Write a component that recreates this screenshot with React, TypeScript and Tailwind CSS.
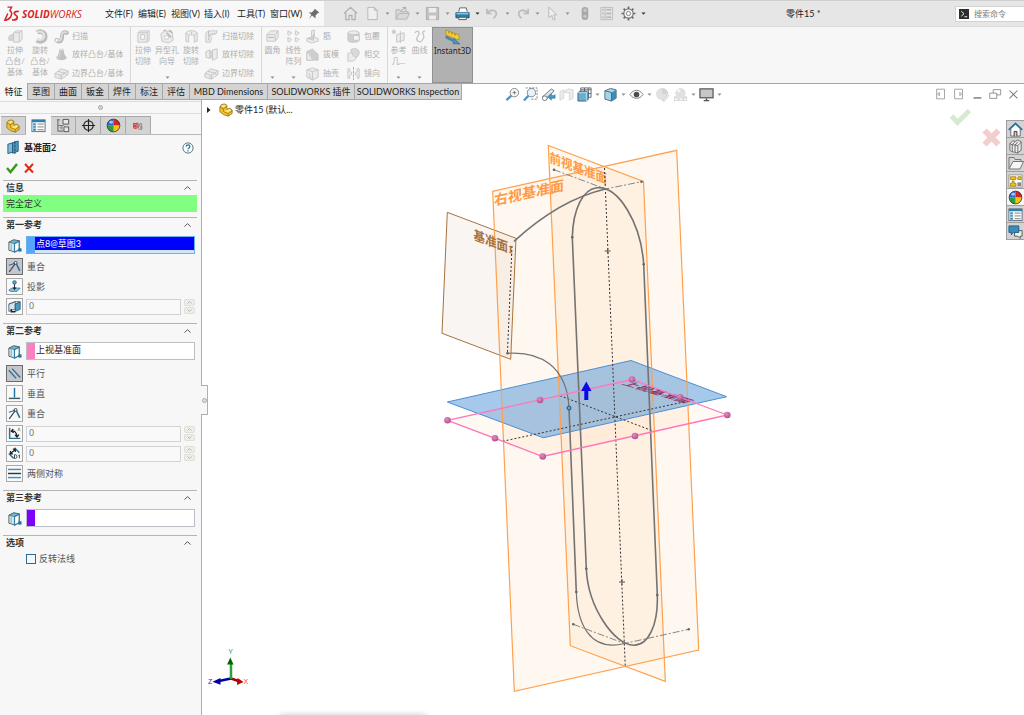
import React from "react";

type IconProps = { size?: number; box?: string; children: React.ReactNode };

function Icon({ size = 15, box = "0 0 16 16", children }: IconProps) {
  return (
    <svg width={size} height={size} viewBox={box} fill="none" aria-hidden="true" className="shrink-0">
      {children}
    </svg>
  );
}

function Caret({ dark = false }: { dark?: boolean }) {
  return (
    <svg width="5" height="3" viewBox="0 0 5 3" aria-hidden="true" className="shrink-0">
      <path d="M0.5 0.5h4L2.5 2.7z" fill={dark ? "#333333" : "#8c8c8c"} />
    </svg>
  );
}

/* ---------- disabled feature glyphs ---------- */
const G = { stroke: "#c6c6c6", fill: "#ebebeb", strokeWidth: 1, strokeLinejoin: "round" as const };

const glyphs: Record<string, React.ReactNode> = {
  extrude: (
    <g {...G}>
      <path d="M1 8l3-2h3v6H1z" fill="#d6d6d6" />
      <path d="M6 4l3-2h6v9l-3 3H6z" />
      <path d="M6 4h6v10M12 4l3-2" />
    </g>
  ),
  revolve: (
    <g>
      <path d="M4.500 4c3-2.500 8.500-.5 8.500 4s-5 6.500-9 4" stroke="#bcbcbc" strokeWidth="5" />
      <path d="M4.500 3.500c3-2 7.500 0 7.500 4s-4 5-8 3.500" stroke="#e2e2e2" strokeWidth="2.200" />
    </g>
  ),
  sweep: (
    <g>
      <path d="M3 12c4 3 5.500 0 5.500-4s2-5 5-4" stroke="#bababa" strokeWidth="4.500" strokeLinecap="round" />
      <path d="M3 12c4 2 5-1 5-4.500S10 3 13 3.500" stroke="#dedede" strokeWidth="1.800" strokeLinecap="round" />
      <circle cx="3" cy="12" r="2" fill="#f4f4f4" stroke="#bdbdbd" />
    </g>
  ),
  loft: (
    <g>
      <path d="M5.500 2.500h5c0 5 1 6.500 3 8.500 1 4-12 4-11 0 2-2 3-3.500 3-8.500z" fill="#c2c2c2" />
      <ellipse cx="8" cy="2.800" rx="2.500" ry="1.200" fill="#dddddd" />
      <path d="M6.500 5c0 4-1 6-3 7" stroke="#d8d8d8" />
    </g>
  ),
  boundary: (
    <g {...G}>
      <path d="M1 8l6-5 8 2v4l-7 5-7-2z" />
      <path d="M1 8l7 2 7-5M8 10v4M4 5.500l7 2M5 12.500l6-5 3 2" />
    </g>
  ),
  cutExtrude: (
    <g {...G}>
      <path d="M2 4l2-2h10v10l-2 2H2z" />
      <path d="M2 4h10v10M12 4l2-2" />
      <rect x="5" y="6" width="4" height="5" fill="#fafafa" />
    </g>
  ),
  hole: (
    <g {...G}>
      <path d="M1 5l4-3 8 1 1 9-5 3-7-2z" />
      <ellipse cx="7" cy="9" rx="2.500" ry="2" fill="#fafafa" />
      <path d="M7 4l5 5M10 1l3 3M4 2l2-1" stroke="#b5b5b5" strokeWidth="1.500" />
    </g>
  ),
  cutRevolve: (
    <g {...G}>
      <path d="M2 4c3-3 9-3 12 0v9l-3 1V7c-1-1-5-1-6 0v7l-3-1z" />
      <path d="M2 4l3 3M14 4l-3 3M8 3v3" />
    </g>
  ),
  cutSweep: (
    <g {...G}>
      <path d="M2 4l3-2h9l-1 3c-3 0-5 2-5 5l-1 4H2z" />
      <path d="M5 12c0-5 2-7 7-7M5 2v6" stroke="#b4b4b4" />
    </g>
  ),
  cutLoft: (
    <g {...G}>
      <path d="M2 5l4-2v9l-4-1zM9 3l5-1v10l-5 2z" />
      <path d="M6 4l3 1v6l-3 1" fill="#d4d4d4" />
    </g>
  ),
  fillet: (
    <g {...G}>
      <path d="M2 6l4-4h8v7l-3 4H2z" />
      <path d="M2 6h6c3 0 3 1 3 3v4M11 6l3-4" />
      <path d="M3 9h7" stroke="#b4b4b4" />
    </g>
  ),
  pattern: (
    <g {...G}>
      <path d="M2 2l4 2-3 3-1-1zM10 2l4 2-3 3-1-1zM2 9l4 2-3 3-1-1zM10 9l4 2-3 3-1-1z" />
    </g>
  ),
  rib: (
    <g {...G}>
      <path d="M2 10l5-1V2l3-1v8l4 1v3l-7 2-5-2z" />
      <path d="M7 9L3 10l6 2V5" fill="#d0d0d0" />
    </g>
  ),
  draft: (
    <g {...G}>
      <path d="M2 5l6-3 6 6v6H2z" fill="#cfcfcf" />
      <path d="M2 5h4l8 3M6 5l8 9M2 5v9h6" />
    </g>
  ),
  shell: (
    <g {...G}>
      <path d="M2 4l6-2 6 2v8l-6 3-6-3z" />
      <path d="M2 4l6 2v9M8 6l6-2M5 8v4l2 1" />
    </g>
  ),
  wrap: (
    <g {...G}>
      <path d="M2 4v8c0 3 12 3 12 0V4" fill="#cfcfcf" />
      <ellipse cx="8" cy="4" rx="6" ry="2" />
      <path d="M8 7h6v5H8z" fill="#f4f4f4" />
    </g>
  ),
  intersect: (
    <g {...G}>
      <path d="M2 7l3-1h6v6l-3 3H2z" />
      <path d="M5 3c3-2 9-2 9 3s-4 5-6 4z" fill="#d9d9d9" />
    </g>
  ),
  mirror: (
    <g {...G}>
      <path d="M2 3h2v3l2 1v2l-2 1v3H2zM14 3h-2v3l-2 1v2l2 1v3h2z" />
      <path d="M8 1v14" stroke="#a8a8a8" strokeDasharray="3 1" />
    </g>
  ),
  refGeo: (
    <g {...G}>
      <circle cx="3" cy="3" r="1.800" fill="#cfcfcf" />
      <path d="M6 6l8-2v8l-8 2zM10 2v13" />
    </g>
  ),
  curve: <path d="M3 4c4-4 6 0 3 4s2 7 4 5 4-4 2-7 1-4 2-4" stroke="#c0c0c0" strokeWidth="1.300" />,
};

type Big = { icon: string; lines: string[]; more?: boolean; w: "n" | "s" };

function BigButton({ icon, lines, more, w }: Big) {
  return (
    <button
      type="button"
      aria-disabled="true"
      className={`flex shrink-0 flex-col items-center pt-[2px] text-[8px] leading-[11px] whitespace-nowrap text-[#b0b0b0] ${
        w === "n" ? "w-6" : "w-[21px]"
      }`}
    >
      <Icon>{glyphs[icon]}</Icon>
      <span className="flex flex-col pt-px">
        {lines.map((l) => (
          <span key={l}>{l}</span>
        ))}
      </span>
      {more && (
        <span className="mt-auto pb-1">
          <Caret />
        </span>
      )}
    </button>
  );
}

function SmallColumn({ items }: { items: [string, string][] }) {
  return (
    <div className="flex shrink-0 flex-col justify-around pl-px">
      {items.map(([icon, label]) => (
        <button
          key={label}
          type="button"
          aria-disabled="true"
          className="flex items-center gap-[3px] text-[8px] leading-[11px] whitespace-nowrap text-[#b0b0b0]"
        >
          <Icon size={15}>{glyphs[icon]}</Icon>
          {label}
        </button>
      ))}
    </div>
  );
}

/* ---------- title bar ---------- */
const menus = ["文件(F)", "编辑(E)", "视图(V)", "插入(I)", "工具(T)", "窗口(W)"];

function ToolButton({ label, more, dark, wide, children }: { label: string; more?: boolean; dark?: boolean; wide?: boolean; children: React.ReactNode }) {
  return (
    <button type="button" aria-label={label} className={`flex shrink-0 items-center ${wide ? "mr-[7px]" : ""}`}>
      <Icon>{children}</Icon>
      {more && (
        <span className="flex w-[15px] justify-center">
          <Caret dark={dark} />
        </span>
      )}
    </button>
  );
}

function TitleBar() {
  return (
    <header className="flex h-[27px] items-stretch border-t border-b border-t-[#cfcfcf] border-b-[#dcdcdc] bg-[#e6e6e6]">
      <div className="flex w-[324px] shrink-0 items-center bg-[#f8f8f8] pl-1">
        <svg width="16" height="16" viewBox="0 0 16 16" fill="none" aria-hidden="true">
          <path d="M3.500 1.200h4.200L5.600 4.800" stroke="#d8232a" strokeWidth="1.300" />
          <path d="M5.600 4.800C8 5.500 8.300 8 6.500 11 5 13.300 3 14 .8 14.200L3.800 7.500" stroke="#d8232a" strokeWidth="1.500" />
          <path d="M14.800 5.500c-2.500-.3-4.300.2-4.500 1.800-.2 1.700 3.400 2 3 4.200-.3 2-2.600 2.700-5.300 2.400" stroke="#d8232a" strokeWidth="1.700" />
        </svg>
        <div className="ml-[2px] w-[83px] text-[10px] leading-[14px] text-[#d8232a] italic [font-family:'Open_Sans',sans-serif]">
          <b>SOLID</b>WORKS
        </div>
        <nav className="flex w-[199px] gap-[6px] text-[9px] leading-[14px] whitespace-nowrap text-[#222222]">
          {menus.map((m) => (
            <button key={m} type="button" className="w-[27px] text-left">
              {m}
            </button>
          ))}
        </nav>
        <button type="button" aria-label="固定菜单" className="ml-1">
          <Icon size={12}>
            <path d="M9 1l6 5-2 1-3 3v4L5.500 10 1 15l3.500-6L1 5.500l4 .5 3-3z" fill="#6e6e6e" />
          </Icon>
        </button>
      </div>
      <div className="flex flex-1 items-center pl-[19px]">
        <ToolButton label="主页" wide>
          <path d="M1 8l7-6.500L15 8M3 7v7.500h3.500V10h3v4.500H13V7" stroke="#b0b0b0" strokeWidth="1.300" />
        </ToolButton>
        <ToolButton label="新建" more>
          <path d="M3 1.500h7l3 3v10H3zM10 1.500v3h3" stroke="#b8b8b8" fill="#efefef" />
        </ToolButton>
        <ToolButton label="打开" more>
          <path d="M1 14V4h4l1 2h8v2M1 14l3-6h11.500l-3 6z" stroke="#b4b4b4" fill="#d9d9d9" />
          <path d="M6 5l5-3M8 1.500h3.500V5" stroke="#a6a6a6" />
        </ToolButton>
        <ToolButton label="保存" more>
          <path d="M1.500 1.500h13v13h-13z" fill="#c2c2c2" stroke="#adadad" />
          <path d="M4 2h8v5H4zM4.500 10h7v4.500h-7z" fill="#ededed" />
        </ToolButton>
        <ToolButton label="打印" more dark>
          <path d="M4 6l1-4h7l1 4" fill="#ffffff" stroke="#606060" />
          <path d="M1 7h14v5.500H1z" fill="#2c7da8" stroke="#1d5573" />
          <path d="M1.500 7h13v2h-13z" fill="#86c4e3" />
          <path d="M4 12h8v2.500H4z" fill="#ffffff" stroke="#555555" />
        </ToolButton>
        <ToolButton label="撤消" more>
          <path d="M2 3v5h5M2 8c3-5 11-4 10 1-.3 2-1.500 3-3 4" stroke="#bcbcbc" strokeWidth="1.800" />
        </ToolButton>
        <ToolButton label="重做" more>
          <path d="M14 3v5H9M14 8c-3-5-11-4-10 1 .3 2 1.500 3 3 4" stroke="#bcbcbc" strokeWidth="1.800" />
        </ToolButton>
        <ToolButton label="选择" more>
          <path d="M4 1l8.500 8.500H9l2 4.500-2 1-2-4.800L4 12.500z" stroke="#b8b8b8" fill="#eeeeee" />
        </ToolButton>
        <div className="w-[2px]" />
        <ToolButton label="重建模型" wide>
          <rect x="5" y="1" width="7" height="14" rx="3.500" fill="#a8a8a8" />
          <circle cx="8.500" cy="4.500" r="1.800" fill="#c9c9c9" />
          <circle cx="8.500" cy="11" r="1.800" fill="#c9c9c9" />
        </ToolButton>
        <ToolButton label="文件属性" wide>
          <path d="M2 1.500h12.500v13H2zM6.500 1.500v13" stroke="#bdbdbd" fill="#e2e2e2" />
          <path d="M3.500 4h1.500M3.500 8h1.500M3.500 12h1.500M8 4h5M8 8h5M8 12h5" stroke="#b4b4b4" strokeWidth="1.500" />
        </ToolButton>
        <ToolButton label="选项" more dark>
          <circle cx="8" cy="8" r="5" stroke="#7c7c7c" strokeWidth="1.300" fill="#f4f4f4" />
          <circle cx="8" cy="8" r="2.200" stroke="#7c7c7c" fill="#ffffff" />
          <path d="M8 .6v2.600M8 12.800v2.600M.6 8h2.600M12.800 8h2.600M2.800 2.800l1.800 1.800M11.400 11.400l1.800 1.800M13.200 2.800l-1.800 1.800M4.600 11.400l-1.800 1.800" stroke="#6c6c6c" strokeWidth="1.800" />
        </ToolButton>
        <h1 className="ml-auto w-[169px] text-[9px] leading-[14px] text-[#222222]">零件15 *</h1>
        <div className="flex h-4 w-[69px] items-center gap-[5px] border border-r-0 border-[#d2d2d2] bg-white pl-[3px]">
          <Icon size={10} box="0 0 11 11">
            <rect width="11" height="11" fill="#2e2e2e" />
            <path d="M2.500 2.500l3 2.700-3 2.800M6 8.500h3" stroke="#ffffff" />
          </Icon>
          <input aria-label="搜索命令" className="h-[14px] w-12 bg-transparent text-[8px] leading-[12px] outline-none placeholder:text-[#7d7d7d]" placeholder="搜索命令" />
        </div>
      </div>
    </header>
  );
}

function Ribbon() {
  return (
    <section aria-label="特征工具栏" className="flex h-[56px] items-stretch bg-[#f7f7f7]">
      <div className="flex w-[131px] shrink-0 gap-px border-r border-[#d8d8d8] pl-[3px]">
        <BigButton w="n" icon="extrude" lines={["拉伸", "凸台/", "基体"]} />
        <BigButton w="n" icon="revolve" lines={["旋转", "凸台/", "基体"]} />
        <SmallColumn items={[["sweep", "扫描"], ["loft", "放样凸台/基体"], ["boundary", "边界凸台/基体"]]} />
      </div>
      <div className="flex w-[131px] shrink-0 border-r border-[#d8d8d8]">
        <BigButton w="n" icon="cutExtrude" lines={["拉伸", "切除"]} />
        <BigButton w="n" icon="hole" lines={["异型孔", "向导"]} more />
        <BigButton w="n" icon="cutRevolve" lines={["旋转", "切除"]} />
        <SmallColumn items={[["cutSweep", "扫描切除"], ["cutLoft", "放样切除"], ["boundary", "边界切除"]]} />
      </div>
      <div className="flex w-[126px] shrink-0 border-r border-[#d8d8d8]">
        <BigButton w="s" icon="fillet" lines={["圆角"]} more />
        <BigButton w="s" icon="pattern" lines={["线性", "阵列"]} more />
        <SmallColumn items={[["rib", "筋"], ["draft", "拔模"], ["shell", "抽壳"]]} />
        <div className="ml-[6px] flex">
          <SmallColumn items={[["wrap", "包覆"], ["intersect", "相交"], ["mirror", "镜向"]]} />
        </div>
      </div>
      <div className="flex w-[44px] shrink-0">
        <BigButton w="s" icon="refGeo" lines={["参考", "几..."]} more />
        <BigButton w="s" icon="curve" lines={["曲线"]} more />
      </div>
      <button
        type="button"
        aria-pressed="true"
        className="flex w-[41px] shrink-0 flex-col items-center border border-[#919191] bg-[#b1b1b1] pt-px text-[8px] leading-[11px] text-[#222222] [font-family:'Noto_Sans',sans-serif]"
      >
        <Icon size={16}>
          <path d="M1 1l13 5v5L1 6z" fill="#f6cf3a" stroke="#a78617" strokeWidth=".7" />
          <path d="M4 2.500v2M7 3.600v2M10 4.700v2" stroke="#8f7310" />
          <path d="M1 7l8 4V9.500l6 5.500-7-.3 1-1.700-8-4z" fill="#4d94be" stroke="#286486" strokeWidth=".6" />
        </Icon>
        Instant3D
      </button>
    </section>
  );
}

const shortTabs = ["特征", "草图", "曲面", "钣金", "焊件", "标注", "评估"];

function TabRow() {
  return (
    <div className="flex h-[17px] items-stretch bg-white text-[9px] leading-[14px] whitespace-nowrap text-[#222222]">
      <div role="tablist" aria-label="命令管理器" className="flex">
        {shortTabs.map((t, i) => (
          <button
            key={t}
            role="tab"
            aria-selected={i === 0}
            type="button"
            className={
              i === 0
                ? "w-[27px] bg-[#f7f7f7]"
                : "w-[27px] border border-r-0 border-[#a6a6a6] bg-[#d4d4d4]"
            }
          >
            {t}
          </button>
        ))}
        <button role="tab" type="button" className="w-[78px] border border-r-0 border-[#a6a6a6] bg-[#d4d4d4]">MBD Dimensions</button>
        <button role="tab" type="button" className="w-[87px] border border-r-0 border-[#a6a6a6] bg-[#d4d4d4]">SOLIDWORKS 插件</button>
        <button role="tab" type="button" className="w-[108px] border border-[#a6a6a6] bg-[#d4d4d4]">SOLIDWORKS Inspection</button>
      </div>
      <div className="flex-1 border-t border-[#a6a6a6]" />
    </div>
  );
}

/* ---------- property panel ---------- */
function PartIcon({ size }: { size: number }) {
  return (
    <Icon size={size}>
      <path d="M1 4.500L2.500 2l3.500-1 3 1.500V7l3.500-1L15 8v4l-4.500 3-5-1.500L1 10z" fill="#f2c230" stroke="#8f6d10" strokeWidth=".9" strokeLinejoin="round" />
      <path d="M1 4.500l4 2L9 4M5 6.500v3.200l5.500 2.300L15 9M10.500 12v3" stroke="#8f6d10" strokeWidth=".8" />
      <path d="M2.500 4l1-1.300L6 2l2 1-3 2zM6 9.300l6.500-2.500L14 8.300l-3.600 2.600z" fill="#fbe48c" />
    </Icon>
  );
}

function Ball({ size }: { size: number }) {
  return (
    <Icon size={size}>
      <path d="M8 8V1a7 7 0 0 1 7 7z" fill="#d3232b" />
      <path d="M8 8h7a7 7 0 0 1-7 7z" fill="#f0c419" />
      <path d="M8 8v7a7 7 0 0 1-7-7z" fill="#2f9e3a" />
      <path d="M8 8H1a7 7 0 0 1 7-7z" fill="#2c68d8" />
      <circle cx="8" cy="8" r="6.800" stroke="#333333" strokeWidth=".8" />
      <ellipse cx="5.500" cy="4.500" rx="2" ry="1.500" fill="#ffffff" opacity=".6" />
    </Icon>
  );
}

function ListIcon({ size }: { size: number }) {
  return (
    <Icon size={size}>
      <rect x="1" y="2" width="14" height="12.500" fill="#ffffff" stroke="#5d6d78" />
      <path d="M1 2h14v2.500H1z" fill="#2f7fa8" />
      <path d="M1.500 5h4v9h-4z" fill="#a9d2e6" />
      <path d="M2.500 6.500H5M2.500 9.500H5M2.500 12.500H5" stroke="#2f7fa8" strokeWidth="1.500" />
      <path d="M7 6.500h6.500M7 9.500h6.500M7 12.500h6.500" stroke="#7a7a7a" />
    </Icon>
  );
}

const panelTabs: [string, React.ReactNode][] = [
  ["特征管理", <PartIcon key="p" size={14} />],
  ["属性管理", <ListIcon key="l" size={15} />],
  [
    "配置管理",
    <Icon key="c" size={15}>
      <path d="M2 1v13.500M1 2h3M2 8h6M2 14h6" stroke="#777777" strokeWidth="1.300" />
      <path d="M7.500 1.500h6v5h-6zM8.500 9.500h5v5h-5z" fill="#e8e8e8" stroke="#555555" />
      <path d="M3.500 10l3.500-2v5z" fill="#999999" />
    </Icon>,
  ],
  [
    "尺寸管理",
    <Icon key="d" size={15}>
      <circle cx="8" cy="8" r="5" stroke="#222222" strokeWidth="1.200" />
      <path d="M8 1v14M1 8h14" stroke="#222222" strokeWidth="1.200" />
    </Icon>,
  ],
  ["外观管理", <Ball key="b" size={15} />],
  [
    "检查",
    <Icon key="i" size={10}>
      <path d="M1 4h4v3H1zM1 9l4-1v4l-4-1zM6 3l2 1v7" stroke="#e23b3b" strokeWidth="1.800" />
      <path d="M8 12c0-6 6-12 6-2v3H9M10 7l4 5M12 3l2 2" stroke="#777777" strokeWidth="1.500" />
    </Icon>,
  ],
];

function Section({ title, children, tight }: { title: string; children: React.ReactNode; tight?: boolean }) {
  return (
    <section className={`mr-1 ml-[3px] border-t border-[#b4b4b4] ${tight ? "pb-[5px]" : "pb-2"}`}>
      <h2 className="h-[14px]">
        <button type="button" aria-expanded="true" className="flex w-full items-center justify-between pr-[6px] pl-[3px] text-[9px] leading-[14px] font-bold text-[#333333]">
          {title}
          <svg width="7" height="4" viewBox="0 0 7 4" fill="none" aria-hidden="true">
            <path d="M.5 3.600l3-3 3 3" stroke="#555555" />
          </svg>
        </button>
      </h2>
      {children}
    </section>
  );
}

function FaceIcon() {
  return (
    <Icon size={15}>
      <path d="M2 4.500L7 2l6 1v9l-4.500 3L2 13z" fill="#dfe9ee" stroke="#4c5f6a" strokeLinejoin="round" />
      <path d="M2 4.500L8.500 6 13 3 7 2z" fill="#6fb6d2" stroke="#4c5f6a" strokeWidth=".7" />
      <path d="M8 6L13 3.500v9L8 15z" fill="#ffffff" stroke="#2f7fa8" strokeWidth="1.300" />
      <path d="M4.500 5.500v8" stroke="#8aa3b0" />
      <rect x="12" y="11" width="3.500" height="3.500" fill="#2574a0" />
    </Icon>
  );
}

function SelectionRow({ label, value, tone }: { label: string; value: string; tone: "blue" | "pink" | "violet" }) {
  const active = tone === "blue";
  const swatch = { blue: "bg-[#58a6fa]", pink: "bg-[#ff80bf]", violet: "bg-[#8000ff]" }[tone];
  return (
    <div className="mt-1 mr-[2px] ml-1 flex items-center gap-[4px]">
      <FaceIcon />
      <span className={`flex h-[18px] flex-1 border ${active ? "border-[#66b3ee] bg-[#cfe5fa]" : "border-[#b9bfc4] bg-white"}`}>
        <span className={`w-2 shrink-0 ${swatch}`} />
        <input
          readOnly
          aria-label={label}
          value={value}
          className={`h-[13px] w-0 flex-1 pl-px text-[9px] leading-[13px] outline-none ${active ? "bg-[#0000ff] text-white" : "bg-transparent text-[#222222]"}`}
        />
      </span>
    </div>
  );
}

function MateBox({ on, children }: { on?: boolean; children: React.ReactNode }) {
  return (
    <span className={`flex size-[17px] shrink-0 items-center justify-center border ${on ? "border-[#6b6b6b] bg-[#c6c6ca]" : "border-[#a9a9a9] bg-[#f9f9f9]"}`}>
      <Icon size={13}>{children}</Icon>
    </span>
  );
}

function Mate({ label, on, children }: { label: string; on?: boolean; children: React.ReactNode }) {
  return (
    <button type="button" aria-pressed={!!on} className="flex h-[17px] items-center gap-1 text-[9px] leading-[14px] text-[#555555]">
      <MateBox on={on}>{children}</MateBox>
      {label}
    </button>
  );
}

function NumberRow({ label, children }: { label: string; children: React.ReactNode }) {
  return (
    <div className="flex h-[17px] items-center gap-[3px]">
      <MateBox>{children}</MateBox>
      <input aria-label={label} defaultValue="0" className="h-4 w-0 flex-1 border border-[#d2d2d2] bg-[#f9f9f9] pb-[2px] pl-[2px] text-[9px] leading-[12px] text-[#777777] outline-none [font-family:'Noto_Sans',sans-serif]" />
      <span className="flex w-[11px] shrink-0 flex-col gap-px">
        {["增加", "减少"].map((t, i) => (
          <button key={t} type="button" aria-label={label + t} className="flex h-[7px] items-center justify-center rounded-[2px] border border-[#dfdfd8] bg-[#efefea]">
            <svg width="5" height="3" viewBox="0 0 5 3" fill="none" aria-hidden="true">
              <path d={i === 0 ? "M.5 2.500l2-2 2 2" : "M.5.5l2 2 2-2"} stroke="#b4b4ae" />
            </svg>
          </button>
        ))}
      </span>
    </div>
  );
}

const coincident = (
  <>
    <path d="M1 6.500l5-1.500 3-2.500" stroke="#2574a0" strokeWidth="1.500" />
    <path d="M1.500 14.500L10 3" stroke="#3a4a54" strokeWidth="1.500" />
    <path d="M10 4l4.500 9.500" stroke="#2574a0" strokeWidth="2" />
    <circle cx="9.500" cy="3.500" r="1.700" fill="#ffffff" stroke="#333333" />
  </>
);

function PropertyPanel() {
  return (
    <aside className="relative flex w-[202px] shrink-0 flex-col border-r border-[#adadad] bg-[#f7f7f7]">
      <div className="mt-px flex h-[13px] items-center justify-center border-y border-[#d9dedd]">
        <span className="size-[5px] rounded-full border border-[#a8a8a8] bg-[#d6d6d6]" />
      </div>
      <div role="tablist" aria-label="管理器" className="mt-[2px] flex h-[19px] border-b border-[#b8b8b8] pl-px">
        {panelTabs.map(([name, icon], i) => (
          <button
            key={name}
            role="tab"
            aria-label={name}
            aria-selected={i === 1}
            type="button"
            className={`flex w-[25px] items-center justify-center ${i === 1 ? "h-[19px] bg-[#f7f7f7]" : "border-t border-r border-[#a9a9a9] bg-[#d3d3d3]"}`}
          >
            {icon}
          </button>
        ))}
      </div>
      <div className="mt-1 flex h-[17px] items-center pr-[7px] pl-[6px] text-[9px] leading-[14px] font-bold text-[#222222]">
        <Icon size={15}>
          <path d="M2 4.500l5-1.500v10l-5 1.500z" fill="#7dbbd8" stroke="#245f80" />
          <path d="M7 3l6-2v11l-6 2z" fill="#4a9ac4" stroke="#245f80" />
          <path d="M9.500 1v14" stroke="#16465f" strokeDasharray="3 1" />
        </Icon>
        <span className="ml-[3px] flex-1">基准面2</span>
        <button type="button" aria-label="帮助">
          <Icon size={12}>
            <circle cx="8" cy="8" r="6.800" fill="#ffffff" stroke="#56707f" strokeWidth="1.300" />
            <path d="M5.500 6.200c.2-3 5-3 5 0 0 1.800-2.500 1.800-2.500 3.600M8 11v1.600" stroke="#2574a0" strokeWidth="1.700" />
          </Icon>
        </button>
      </div>
      <div className="mb-[6px] flex h-[18px] items-end gap-[5px] pl-[6px]">
        <button type="button" aria-label="确定">
          <Icon size={12} box="0 0 12 12">
            <path d="M1 6l3.500 4L11 2" stroke="#3b9a1e" strokeWidth="2.500" />
          </Icon>
        </button>
        <button type="button" aria-label="取消">
          <Icon size={12} box="0 0 12 12">
            <path d="M2 2l8 8.500M10 2L2 10.500" stroke="#e02b14" strokeWidth="2" />
          </Icon>
        </button>
      </div>

      <Section title="信息" tight>
        <p className="h-[17px] bg-[#80ff80] pl-[3px] text-[9px] leading-[17px] text-[#333333]">完全定义</p>
      </Section>

      <Section title="第一参考">
        <SelectionRow label="第一参考" value="点8@草图3" tone="blue" />
        <div className="mt-1 mr-[2px] ml-[3px] flex flex-col gap-[3px]">
          <Mate label="重合" on>{coincident}</Mate>
          <Mate label="投影">
            <path d="M1 12.500l4-2.500h10l-4 4H3z" fill="#8cc5de" stroke="#2574a0" />
            <path d="M8 4v7M6 9l2 2.500L10 9" stroke="#333333" strokeWidth="1.300" />
            <circle cx="8" cy="3" r="2.200" fill="#5aa5c9" stroke="#245f80" />
          </Mate>
          <NumberRow label="与曲线垂直">
            <path d="M1 5l8-3v9l-8 3z" fill="#cfe5ef" stroke="#4c5f6a" />
            <path d="M1 5l8-3h6L9 5v9" stroke="#4c5f6a" />
            <path d="M9 5l6-2.500v9L9 14z" fill="#4d9ac0" stroke="#245f80" />
            <path d="M4 11v3.500h5" stroke="#222222" strokeWidth="1.700" />
          </NumberRow>
        </div>
      </Section>

      <Section title="第二参考">
        <SelectionRow label="第二参考" value="上视基准面" tone="pink" />
        <div className="mt-[5px] mr-[2px] ml-[3px] flex flex-col gap-[3px]">
          <Mate label="平行" on>
            <path d="M1 4l9 10" stroke="#2f6f95" strokeWidth="1.700" />
            <path d="M5 2l10 11" stroke="#2f6f95" strokeWidth="1.700" />
          </Mate>
          <Mate label="垂直">
            <path d="M8 1v12" stroke="#2574a0" strokeWidth="1.800" />
            <path d="M1 14h14" stroke="#3f5f70" strokeWidth="1.800" />
          </Mate>
          <Mate label="重合">{coincident}</Mate>
          <NumberRow label="角度">
            <path d="M2 1v13h13" stroke="#2574a0" strokeWidth="1.800" />
            <path d="M4 5c4-1 7 2 7 7M6.500 2.500L4 5l3 2M8.500 9.500l2.500 3 2.500-3" stroke="#222222" strokeWidth="1.500" />
            <path d="M12 5l1.500-4L15 5M12.500 3.500h2" stroke="#888888" strokeWidth=".8" />
          </NumberRow>
          <NumberRow label="距离">
            <path d="M1 8l6 6M8 1l6 6" stroke="#2574a0" strokeWidth="1.800" />
            <path d="M3 8l6-5M3 5v3.500h3M6 2.500h3V6" stroke="#222222" strokeWidth="1.500" />
            <path d="M8 9.500V14h1.500c2 0 2-4.500 0-4.500zM13 10.500l1-1V14" stroke="#222222" />
          </NumberRow>
          <Mate label="两侧对称">
            <path d="M0 3h16" stroke="#4591ba" strokeWidth="1.800" />
            <path d="M0 8h16" stroke="#2c3a43" strokeWidth="1.800" />
            <path d="M0 13h16" stroke="#4591ba" strokeWidth="1.800" />
          </Mate>
        </div>
      </Section>

      <Section title="第三参考">
        <SelectionRow label="第三参考" value="" tone="violet" />
      </Section>

      <Section title="选项">
        <label className="mt-[3px] ml-[23px] flex items-center gap-[3px] text-[9px] leading-[11px] text-[#555555]">
          <input type="checkbox" className="size-[10px] appearance-none border border-[#2f6796] bg-[#f4f8fb]" />
          反转法线
        </label>
      </Section>

      <button type="button" aria-label="折叠面板" className="absolute top-[285px] -right-[7px] z-10 flex h-[30px] w-[7px] items-center justify-center border border-l-0 border-[#b0b0b0] bg-[#f7f7f7]">
        <span className="size-[5px] rounded-full border border-[#a8a8a8] bg-[#dedede]" />
      </button>
    </aside>
  );
}

/* ---------- graphics area ---------- */
const handles = [
  [447.5, 420.3], [540, 400], [632, 379.5], [680, 397.2], [727.3, 415], [635, 436], [542.7, 456.5], [495, 438.3],
];
const marks = [
  [554, 169.7], [641.5, 181.7], [573.3, 624.3], [688.7, 629.3], [507.5, 353.3], [572.3, 237.3], [643.7, 264.3], [586.3, 568.7], [576.3, 592], [657.3, 595],
];

function Model() {
  return (
    <svg
      role="img"
      aria-label="零件模型"
      viewBox="202 100 822 615"
      preserveAspectRatio="xMidYMid meet"
      fill="none"
      className="absolute inset-0 size-full"
      fontFamily="'Liberation Serif','Noto Sans CJK SC',serif"
    >
      <defs>
        <radialGradient id="bead" cx=".4" cy=".35" r=".7">
          <stop offset="0" stopColor="#e08fc0" />
          <stop offset="1" stopColor="#b04a8a" />
        </radialGradient>
      </defs>
      <path d="M447.300 212.300L516 238.300 510.700 359.300 442 333.300z" fill="#f8f5f3" stroke="#a6713f" />
      <path d="M492.700 191.300L676.700 150.300 698.700 650 514.300 691.300z" fill="#ff9020" fillOpacity=".065" />
      <path d="M548.300 145.500L643.500 181.500 665.300 681.300 570.300 645.700z" fill="#ff9020" fillOpacity=".065" />
      <path d="M447.300 420.300L632 379.500 727.300 415 542.700 456.500z" fill="#ff9020" fillOpacity=".05" />
      <path d="M447.300 402L631 360.500 726.700 396.700 543.300 437.800z" fill="#5c9ad8" fillOpacity=".55" stroke="#4a8fd6" />
      <g stroke="#ffa04d" strokeWidth="1.200">
        <path d="M492.700 191.300L676.700 150.300 698.700 650 514.300 691.300z" />
        <path d="M548.300 145.500L643.500 181.500 665.300 681.300 570.300 645.700z" />
      </g>

      <g fontWeight="700">
        <text transform="matrix(1 .38 0 1.150 549.500 162)" fontSize="11.500" fill="#ff9a45">前视基准面</text>
        <text transform="matrix(1 -.22 0 1 494 205.500)" fontSize="14" fill="#ff9a45">右视基准面</text>
        <text transform="matrix(1 .37 0 1.150 473.500 239.500)" fontSize="11.500" fill="#a6713f">
          基准面<tspan fontSize="10">1</tspan>
        </text>
        <text transform="matrix(1 .3 -.9 .28 621 384)" fontSize="13" fill="#8f3566">上视基准面</text>
      </g>

      <g stroke="#333333" strokeDasharray="2 2">
        <path d="M604.500 168L625.300 667" />
        <path d="M512 246L507.500 352" />
        <path d="M560 395.700L653 431M502.700 441.300L686 401.500" />
      </g>
      <g stroke="#777777" strokeDasharray="7 2 2 2" strokeWidth=".9">
        <path d="M554 169.700L605.500 189 641.500 181.700M573.300 624.300L624.500 643.500 688.700 629.300" />
      </g>

      <g stroke="#737373" strokeWidth="1.600">
        <path d="M572.300 237.300C573 209 583 189 597 187.700c22-1.500 44 36 46.700 76.600L657.300 595c1 30-9 50.500-23.500 50.200C614 645 588 607 586.300 568.700z" />
        <path d="M514 241.300C545 213 575 196 605.500 189" />
        <path d="M569 408L576.300 592" />
        <path d="M507.500 353.300C540 351 567 366 569 408M576.300 592c1 31 13 60 48.200 51.500" strokeWidth="1.200" />
      </g>
      <path d="M604.700 251h6M607.700 248v6M619 582h6M622 579v6" stroke="#555555" />
      {marks.map(([x, y]) => (
        <circle key={`${x}-${y}`} cx={x} cy={y} r="1.300" fill="#666666" />
      ))}
      <circle cx="569" cy="408" r="2" fill="#63a8dc" stroke="#1f4f78" />

      <path d="M447.500 420.300L632 379.500 727.300 415 542.700 456.500z" stroke="#ff77bb" strokeWidth="1.300" />
      {handles.map(([x, y]) => (
        <circle key={`${x}-${y}`} cx={x} cy={y} r="3.300" fill="url(#bead)" />
      ))}
      <path d="M586.300 381.500l5.200 9.500h-3.200v9h-4v-9h-3.200z" fill="#0a0ae6" />

      <g fontFamily="'Liberation Sans',sans-serif" fontSize="7">
        <path d="M231 678.500L240 681.500" stroke="#a80000" strokeWidth="2.500" />
        <path d="M237.500 678l6 4-6.500 3z" fill="#c00000" />
        <path d="M231 678.500L219 681" stroke="#0000a8" strokeWidth="2.500" />
        <path d="M220.500 678l-8 3.700 8 3z" fill="#0000a8" />
        <path d="M231 679V664" stroke="#2ea03a" strokeWidth="2.500" />
        <path d="M230.300 657.500l3.200 7h-6.400z" fill="#006400" />
        <text x="228.300" y="654" fill="#2ea03a">Y</text>
        <text x="208" y="684" fill="#2222dd">Z</text>
        <text x="243.500" y="684" fill="#ff4040">X</text>
      </g>
    </svg>
  );
}

const hud: { label: string; more?: boolean; art: React.ReactNode }[] = [
  {
    label: "整屏显示",
    art: (
      <>
        <path d="M7 9l-5.500 5" stroke="#4d94be" strokeWidth="2.400" />
        <circle cx="10" cy="6" r="4.500" fill="#f6fafc" stroke="#7b868c" />
        <path d="M8 6h4M10 4v4" stroke="#777777" />
      </>
    ),
  },
  {
    label: "局部放大",
    art: (
      <>
        <path d="M6 9l-5 5.500" stroke="#4d94be" strokeWidth="2.400" />
        <circle cx="9" cy="6" r="4.500" fill="#e8f2f7" stroke="#7b868c" />
        <path d="M3 1h12v12H8" stroke="#777777" strokeDasharray="2 1.500" />
      </>
    ),
  },
  {
    label: "上一视图",
    art: (
      <>
        <path d="M1.500 10.500L11 2l3 2-8 9z" fill="#d9e3e8" stroke="#727e85" />
        <circle cx="4" cy="12" r="2.500" fill="#ffffff" stroke="#727e85" />
        <path d="M15 8v4h-4v2l-4-3.500L11 7v2h1.500" fill="#4d94be" stroke="#2f7fa8" strokeWidth=".7" />
      </>
    ),
  },
  {
    label: "剖面视图",
    art: <path d="M1 5l4-2v9l-4 2zM6 4l4-2 5 1v9l-4 2V6H6z" fill="#ececec" stroke="#d6d6d6" />,
  },
  {
    label: "视图定向",
    more: true,
    art: (
      <>
        <path d="M4 5V1h11v10h-4M8 1v4M12 1v10M4 3h11M11 7h4" stroke="#555555" strokeWidth=".9" />
        <path d="M1 6l2-1.500h9V13l-2 2H1z" fill="#6aaed0" stroke="#2b5f7c" strokeWidth=".9" />
        <path d="M1 6h9v9M10 6l2-1.500" stroke="#c2e2ef" strokeWidth=".9" />
      </>
    ),
  },
  {
    label: "显示样式",
    more: true,
    art: (
      <>
        <path d="M2 4l6-2.500L14 3v9l-5 3-7-2z" fill="#a8d5e6" stroke="#3c6479" strokeWidth=".9" />
        <path d="M9 6l5-3v9l-5 3z" fill="#3b8db8" />
        <path d="M2 4l7 2v9" stroke="#3c6479" strokeWidth=".9" />
      </>
    ),
  },
  {
    label: "隐藏/显示项目",
    more: true,
    art: (
      <>
        <path d="M1 8c4-6 10-6 14 0-4 5.500-10 5.500-14 0z" fill="#ffffff" stroke="#7d7d7d" />
        <circle cx="8" cy="8" r="3" fill="#4c4c4c" />
      </>
    ),
  },
  {
    label: "编辑外观",
    art: (
      <>
        <circle cx="7.500" cy="7.500" r="6.500" fill="#e2e2e2" />
        <path d="M7.500 7.500V1A6.500 6.500 0 0 1 14 7.500z" fill="#d4d4d4" />
        <path d="M8 15l5-7 2 1-5 6z" fill="#f4f4f4" stroke="#d0d0d0" />
      </>
    ),
  },
  {
    label: "应用布景",
    more: true,
    art: (
      <>
        <path d="M1 10h14v5H1z" fill="#d8d8d8" />
        <path d="M2 12h3v2H2zM7 12h3v2H7zM12 12h2v2h-2z" fill="#f7f7f7" />
        <circle cx="8" cy="6.500" r="5.500" fill="#e0e0e0" />
        <ellipse cx="6" cy="4" rx="2" ry="1.500" fill="#f6f6f6" />
      </>
    ),
  },
  {
    label: "视图设定",
    more: true,
    art: (
      <>
        <rect x="1" y="2" width="14" height="9.500" fill="#c4c8ca" stroke="#555555" strokeWidth="1.300" />
        <path d="M8 12v2.500M5 14.500h6" stroke="#555555" strokeWidth="1.500" />
      </>
    ),
  },
];

const windowButtons: [string, React.ReactNode][] = [
  ["左侧窗格", <path key="a" d="M3 2.500h9v11H3zM6 6L4 8l2 2z" stroke="#9a9a9a" />],
  ["右侧窗格", <path key="b" d="M3 2.500h9v11H3zM9 6l2 2-2 2z" stroke="#9a9a9a" />],
  ["最小化", <path key="c" d="M4 12.500h9" stroke="#777777" strokeWidth="1.600" />],
  ["还原", <path key="d" d="M2 7h8v6H2zM6 7V3h8.500v6H10" stroke="#888888" />],
  ["关闭", <path key="e" d="M4 4l9 9M13 4l-9 9" stroke="#777777" strokeWidth="1.200" />],
];

const taskPane: [string, React.ReactNode][] = [
  [
    "资源",
    <Icon key="1" size={15}>
      <path d="M3 7v8h10V7L8 2z" fill="#ffffff" stroke="#666666" />
      <path d="M.8 8.500L8 1.500l7.200 7" stroke="#2574a0" strokeWidth="1.800" />
      <path d="M6.500 15v-5h3v5" stroke="#333333" fill="#cccccc" />
    </Icon>,
  ],
  [
    "设计库",
    <Icon key="2" size={15}>
      <path d="M2 5l3-3 3 .5L10.500 1 14 3v9l-4 3-3-1-3-.5L2 12z" fill="#eeeeee" stroke="#666666" />
      <path d="M2 5l2.500 1L7.500 3M4.500 6v7.500M7.500 6.500l3-3.500M7.500 6.500V14M10.500 7L14 3.500M10.500 7v8M4.500 6l6 1" stroke="#666666" />
    </Icon>,
  ],
  [
    "文件探索器",
    <Icon key="3" size={16}>
      <path d="M1 14V2.500h5l1 2h6V7" fill="#d8d8d8" stroke="#777777" />
      <path d="M1 14l4-7.500h10.500L12 14z" fill="#f6f6f6" stroke="#777777" />
    </Icon>,
  ],
  [
    "视图调色板",
    <Icon key="4" size={15}>
      <rect x="1" y="2" width="14" height="13" fill="#ffffff" stroke="#999999" />
      <path d="M2.500 4h6v3h-6zM10.500 4h3.500v3h-3.500zM2.500 14v-3h2V8.500h2V11h2v3z" fill="#f4c40f" stroke="#9c7710" strokeWidth=".8" />
      <path d="M10 10h4v4h-4z" fill="#888888" />
    </Icon>,
  ],
  ["外观", <Ball key="5" size={15} />],
  ["自定义属性", <ListIcon key="6" size={15} />],
  [
    "论坛",
    <Icon key="7" size={15}>
      <path d="M7 7h8v6h-2v2.500L10.500 13H7z" fill="#eeeeee" stroke="#555555" />
      <path d="M1 2h10.500v7H6l-2.500 2.500V9H1z" fill="#3b8db8" stroke="#245f80" />
    </Icon>,
  ],
];

function Viewport() {
  return (
    <main className="relative min-w-0 flex-1 bg-white">
      <Model />
      <div className="absolute inset-x-0 -top-[14px] flex h-4 items-center justify-center">
        {hud.map((h) => (
          <button key={h.label} type="button" aria-label={h.label} className="flex items-center">
            <span className="flex w-[18px] justify-center">
              <Icon size={15}>{h.art}</Icon>
            </span>
            {h.more && (
              <span className="flex w-2 justify-center">
                <Caret />
              </span>
            )}
          </button>
        ))}
      </div>
      <div className="absolute -top-[14px] right-[2px] flex h-4 items-center">
        {windowButtons.map(([label, art]) => (
          <button key={label} type="button" aria-label={label} className="flex w-[18px] justify-center">
            <Icon size={14}>{art}</Icon>
          </button>
        ))}
      </div>
      <button type="button" aria-expanded="false" className="absolute top-[2px] left-1 flex h-4 items-center text-[9px] leading-[14px] text-[#222222]">
        <svg width="5" height="6" viewBox="0 0 5 6" aria-hidden="true">
          <path d="M1 0l3.500 3L1 6z" fill="#222222" />
        </svg>
        <span className="mr-[2px] ml-2">
          <PartIcon size={14} />
        </span>
        零件15 (默认...
      </button>
      <button type="button" aria-label="确定" className="absolute top-[6px] right-[53px]">
        <Icon size={21} box="0 0 21 17">
          <path d="M1.500 8l6 6.500L19.500 2.500" stroke="#d6ead2" strokeWidth="5" />
        </Icon>
      </button>
      <button type="button" aria-label="取消" className="absolute top-[28px] right-[23px]">
        <Icon size={19} box="0 0 19 19">
          <path d="M2.500 2.500l14 14M16.500 2.500l-14 14" stroke="#f2cfcc" strokeWidth="6" />
        </Icon>
      </button>
      <nav aria-label="任务窗格" className="absolute top-5 right-0 flex w-[18px] flex-col border-t border-l border-[#9e9e9e]">
        {taskPane.map(([label, icon], i) => (
          <button
            key={label}
            type="button"
            aria-label={label}
            className={`flex h-[17px] items-center justify-center border-b border-[#9e9e9e] ${i === 4 ? "bg-[#f7f7f7]" : "bg-[#d3d3d3]"}`}
          >
            {icon}
          </button>
        ))}
      </nav>
      <div className="absolute bottom-0 left-[70px] h-[5px] w-[162px] overflow-hidden">
        <div className="mx-2 mt-[5px] h-2 shadow-[0_0_6px_0_#c8c8c8]" />
      </div>
    </main>
  );
}

export default function App() {
  return (
    <div className="flex min-h-screen flex-col overflow-hidden bg-white [font-family:Lato,'Noto_Sans_CJK_SC',sans-serif]">
      <TitleBar />
      <Ribbon />
      <TabRow />
      <div className="flex flex-1 items-stretch">
        <PropertyPanel />
        <Viewport />
      </div>
    </div>
  );
}
